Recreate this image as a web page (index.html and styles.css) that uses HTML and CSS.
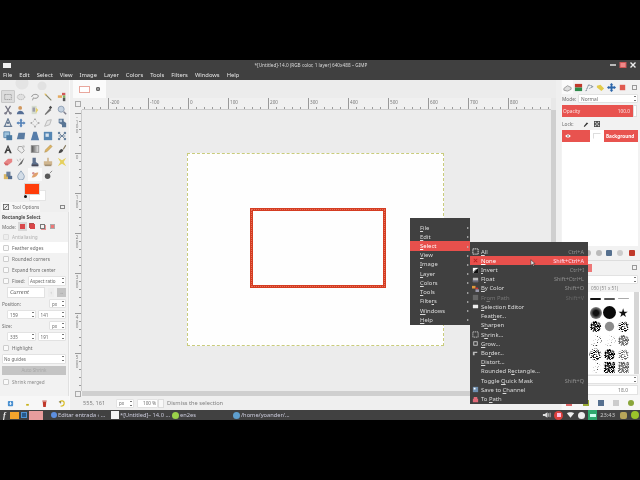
FILE: index.html
```html
<!DOCTYPE html>
<html lang="en">
<head>
<meta charset="utf-8">
<title>GIMP</title>
<link rel="stylesheet" href="styles.css">
</head>
<body>
<div class="bar-black"></div>
<div class="window">
  <header class="titlebar">
    <span class="win-icon"></span>
    <span class="win-title">*[Untitled]-14.0 (RGB color, 1 layer) 640x488 – GIMP</span>
    <span class="win-btns">
      <svg viewBox="0 0 8 8"><path d="M1 4h6" stroke="#eee" stroke-width="1.4"/></svg>
      <svg viewBox="0 0 8 8"><rect x="1" y="1.5" width="6" height="5" fill="#e88" stroke="#c55"/></svg>
      <svg viewBox="0 0 8 8"><path d="M1.5 1.5l5 5M6.5 1.5l-5 5" stroke="#eee" stroke-width="1.4"/></svg>
    </span>
  </header>
  <nav class="menubar">
    <span>File</span><span>Edit</span><span>Select</span><span>View</span><span>Image</span><span>Layer</span><span>Colors</span><span>Tools</span><span>Filters</span><span>Windows</span><span>Help</span>
  </nav>
  <div class="main">
    <aside class="left">
      <div class="wilber"></div>
      <div class="toolbox">
        <span class="tool active"><svg viewBox="0 0 12 12"><rect x="2" y="3" width="8" height="6" fill="#ddd" stroke="#888" stroke-dasharray="1.5 .7"/></svg></span>
        <span class="tool"><svg viewBox="0 0 12 12"><ellipse cx="6" cy="6" rx="4.5" ry="3.2" fill="#ddd" stroke="#999" stroke-dasharray="1.5 .7"/></svg></span>
        <span class="tool"><svg viewBox="0 0 12 12"><path d="M2 6c0-4 8-4 8-1s-5 3-6 2l-1 3" fill="none" stroke="#777" stroke-width="1.1"/></svg></span>
        <span class="tool"><svg viewBox="0 0 12 12"><path d="M3 3l7 7" stroke="#6c6c4c" stroke-width="1.3"/><path d="M2 2l2 2" stroke="#e2b33a" stroke-width="1.4"/></svg></span>
        <span class="tool"><svg viewBox="0 0 12 12"><path d="M1 4h5v3H1z" fill="#e2983a"/><path d="M6 1h4v3H6z" fill="#c33"/><path d="M7 4h3v3H7z" fill="#6a4"/><path d="M7 7h3v4H7z" fill="#333"/></svg></span>

        <span class="tool"><svg viewBox="0 0 12 12"><path d="M3 1l6 10M9 1L3 11" stroke="#556" stroke-width="1.4"/><circle cx="3" cy="10" r="1.5" fill="#667"/><circle cx="9" cy="10" r="1.5" fill="#667"/></svg></span>
        <span class="tool"><svg viewBox="0 0 12 12"><circle cx="5" cy="3.5" r="2.3" fill="#c9823a"/><path d="M1 11c0-5 7-6 9 0z" fill="#2f4f80"/></svg></span>
        <span class="tool"><svg viewBox="0 0 12 12"><path d="M2 1h6v10H2z" fill="#cfd8c8"/><path d="M7 3l3 3-3 4z" fill="#e4c648"/><path d="M3 3h3v5H3z" fill="#889"/></svg></span>
        <span class="tool"><svg viewBox="0 0 12 12"><path d="M2 11l6-7 2 2-7 6z" fill="#555"/><path d="M7 3l2-2 2 2-2 2z" fill="#222"/></svg></span>
        <span class="tool"><svg viewBox="0 0 12 12"><circle cx="5" cy="5" r="3.6" fill="#bcd" stroke="#7a8ea8" stroke-width="1.2"/><path d="M8 8l3 3" stroke="#667" stroke-width="1.8"/></svg></span>

        <span class="tool"><svg viewBox="0 0 12 12"><path d="M6 1L2 10h8z" fill="none" stroke="#47607f" stroke-width="1.5"/><circle cx="6" cy="6" r="1.4" fill="#47607f"/><path d="M1 10h3M8 10h3" stroke="#47607f" stroke-width="1.6"/></svg></span>
        <span class="tool"><svg viewBox="0 0 12 12"><path d="M6 .5L8 3H7v2h2V4l2.500 2L9 8V7H7v2h1l-2 2.500L4 9h1V7H3v1L.5 6 3 4v1h2V3H4z" fill="#2c66aa"/></svg></span>
        <span class="tool"><svg viewBox="0 0 12 12"><path d="M6 2l4 4-4 4-4-4z" fill="none" stroke="#888" stroke-dasharray="1 1"/><circle cx="6" cy="1.500" r="1" fill="#777"/><circle cx="6" cy="10.500" r="1" fill="#777"/><circle cx="1.500" cy="6" r="1" fill="#777"/><circle cx="10.500" cy="6" r="1" fill="#777"/></svg></span>
        <span class="tool"><svg viewBox="0 0 12 12"><path d="M2 10l3-7 5-1-2 6z" fill="#e4e4e4" stroke="#a5a5a5"/></svg></span>
        <span class="tool"><svg viewBox="0 0 12 12"><path d="M2 1h6v3l3 2v5H6V8L2 6z" fill="#36587f"/><path d="M3 2h3v3H3z" fill="#a9bdd2"/></svg></span>

        <span class="tool"><svg viewBox="0 0 12 12"><path d="M1 1h7v7H1z" fill="#8bb8d8" stroke="#245f91"/><path d="M4 5h7v6H4z" fill="#245f91"/></svg></span>
        <span class="tool"><svg viewBox="0 0 12 12"><path d="M3 2h8l-1 8H1z" fill="#36608f"/></svg></span>
        <span class="tool"><svg viewBox="0 0 12 12"><path d="M4 1h4l3 10H1z" fill="#31619a"/></svg></span>
        <span class="tool"><svg viewBox="0 0 12 12"><path d="M1 1h10v10H1z" fill="#2f6ca5"/><path d="M3 3h4v4H3z" fill="#cfe0ee"/></svg></span>
        <span class="tool"><svg viewBox="0 0 12 12"><path d="M2 2l8 8M10 2l-8 8M2 6h8" stroke="#3d5c7d" stroke-width="1"/><circle cx="2.500" cy="2.500" r="1.500" fill="#46688c"/><circle cx="9.500" cy="9.500" r="1.500" fill="#46688c"/><circle cx="9.500" cy="2.500" r="1.500" fill="#46688c"/><circle cx="2.500" cy="9.500" r="1.500" fill="#46688c"/></svg></span>

        <span class="tool"><svg viewBox="0 0 12 12"><path d="M6 1L1.500 11h2.300l1-2.600h2.400l1 2.600h2.300z" fill="#111"/><path d="M6 4L5.200 6.500h1.600z" fill="#f3f3f3"/></svg></span>
        <span class="tool"><svg viewBox="0 0 12 12"><path d="M3 3h4l3 5-3 3-5-4z" fill="#eee" stroke="#888"/><circle cx="9" cy="3" r="1.500" fill="#bbb"/></svg></span>
        <span class="tool"><svg viewBox="0 0 12 12"><rect x="1.500" y="2" width="9" height="8" fill="url(#g1)" stroke="#777"/><defs><linearGradient id="g1"><stop offset="0" stop-color="#222"/><stop offset="1" stop-color="#eee"/></linearGradient></defs></svg></span>
        <span class="tool"><svg viewBox="0 0 12 12"><path d="M2 10l1-3 6-6 2 2-6 6z" fill="#d9a53f" stroke="#8a6a2a" stroke-width=".5"/></svg></span>
        <span class="tool"><svg viewBox="0 0 12 12"><path d="M7 6l3-5 1 1-3 5z" fill="#6a5a3a"/><path d="M2 11c0-3 2-5 4-5l1.500 1.500C7 10 4 11 2 11z" fill="#222"/></svg></span>

        <span class="tool"><svg viewBox="0 0 12 12"><path d="M1 7l5-5h5v4l-5 4H3z" fill="#e66b6b"/><path d="M1 7l2 3h3V8z" fill="#c44"/></svg></span>
        <span class="tool"><svg viewBox="0 0 12 12"><path d="M2 11l3-4 5-6-3 7z" fill="#444"/><path d="M1 3l2 2M5 2v2" stroke="#888"/></svg></span>
        <span class="tool"><svg viewBox="0 0 12 12"><path d="M3 1h4v5l3 2v3H2V8l1-1z" fill="#3b5277"/><path d="M2 9h8v2H2z" fill="#223"/></svg></span>
        <span class="tool"><svg viewBox="0 0 12 12"><path d="M5 1h2v4h4v5H1V5h4z" fill="#c9a877"/><path d="M2 9h8v2H2z" fill="#8d7655"/></svg></span>
        <span class="tool"><svg viewBox="0 0 12 12"><path d="M1 1l5 3 5-3-3 5 3 5-5-3-5 3 3-5z" fill="#e3c93b"/></svg></span>

        <span class="tool"><svg viewBox="0 0 12 12"><path d="M1 5h5v6H1z" fill="#d6a93f"/><path d="M4 2h5v6H4z" fill="#4a6385"/><path d="M6 7h5v4H6z" fill="#2e4c75"/></svg></span>
        <span class="tool"><svg viewBox="0 0 12 12"><path d="M6 1C4 4 2 6 2 8a4 4 0 008 0c0-2-2-4-4-7z" fill="#cdd9e6" stroke="#6f89a6"/></svg></span>
        <span class="tool selected"><svg viewBox="0 0 12 12"><path d="M2 9c2-5 4-6 8-6-1 4-3 6-8 6z" fill="#d98c4a"/><circle cx="4" cy="4" r="1.500" fill="#c77"/></svg></span>
        <span class="tool"><svg viewBox="0 0 12 12"><circle cx="5.500" cy="7.500" r="3.300" fill="#333"/><path d="M8 4l3-3" stroke="#777" stroke-width="1.200"/></svg></span>
      </div>
      <div class="colors">
        <span class="fg-color"></span>
        <span class="bg-color"></span>
        <span class="def-color"></span>
      </div>
      <div class="tabrow">
        <span class="tab-opts"><svg viewBox="0 0 8 8"><rect x=".5" y=".5" width="7" height="7" fill="#eee" stroke="#555"/><path d="M2 6l4-4" stroke="#333"/></svg>Tool Options</span>
        <span class="tab-cfg"></span>
      </div>
      <form class="options">
        <div class="opt-row opt-title">Rectangle Select</div>
        <div class="opt-row opt-mode"><span class="mode-label">Mode:</span>
          <span class="modes">
            <span class="mode on"><i class="m-a"></i></span>
            <span class="mode"><i class="m-b"></i></span>
            <span class="mode"><i class="m-c"></i></span>
            <span class="mode"><i class="m-d"></i></span>
          </span>
        </div>
        <div class="opt-row dim"><i class="check faint"></i>Antialiasing</div>
        <div class="opt-row hot"><i class="check"></i>Feather edges</div>
        <div class="opt-row"><i class="check"></i>Rounded corners</div>
        <div class="opt-row"><i class="check"></i>Expand from center</div>
        <div class="opt-row"><i class="check"></i><span class="fixed-label">Fixed:</span><span class="combo fixed-combo">Aspect ratio<b></b></span></div>
        <div class="opt-row tall indent"><span class="entry current">Current</span><span class="mini">↕</span><span class="mini dark">↔</span></div>
        <div class="opt-row between">Position:<span class="combo unit">px<b></b></span></div>
        <div class="opt-row indent pair"><span class="combo num">159<b></b></span><span class="combo num">141<b></b></span></div>
        <div class="opt-row between">Size:<span class="combo unit">px<b></b></span></div>
        <div class="opt-row indent pair"><span class="combo num">335<b></b></span><span class="combo num">191<b></b></span></div>
        <div class="opt-row"><i class="check"></i>Highlight</div>
        <div class="opt-row"><span class="combo wide">No guides<b></b></span></div>
        <div class="opt-row tall"><span class="auto-shrink">Auto Shrink</span></div>
        <div class="opt-row soft-text"><i class="check"></i>Shrink merged</div>
      </form>
      <footer class="left-foot">
        <svg viewBox="0 0 8 8"><rect x="1" y="1" width="6" height="6" rx="1" fill="#4a90d0"/><path d="M4 2v3M2.800 4L4 5.400 5.200 4" stroke="#fff" fill="none"/></svg>
        <svg viewBox="0 0 8 8"><rect x="2.500" y="4.500" width="3" height="2" fill="#c8b21c"/></svg>
        <svg viewBox="0 0 8 8"><path d="M2 2h4l-.5 6h-3z" fill="#c0392b"/><path d="M1.500 1.200h5" stroke="#c0392b"/></svg>
        <svg viewBox="0 0 8 8"><path d="M2 3a2.500 2.500 0 115 1c0 2-2 3-4 3" fill="none" stroke="#d8bd20" stroke-width="1.300"/><path d="M1 2h2v2" fill="none" stroke="#333" stroke-width=".6"/></svg>
      </footer>
    </aside>

    <section class="center">
      <div class="img-tabs">
        <span class="img-tab"><i class="thumb"></i><i class="close-x"></i></span>
      </div>
      <div class="h-ruler-row">
        <span class="corner"></span>
        <div class="h-ruler">
          <span>-200</span><span>-100</span><span>0</span><span>100</span><span>200</span><span>300</span><span>400</span><span>500</span><span>600</span><span>700</span><span>800</span>
        </div>
        <span class="corner-r"></span>
      </div>
      <div class="work">
        <div class="v-ruler">
          <span>-100</span><span>0</span><span>100</span><span>200</span><span>300</span><span>400</span><span>500</span>
        </div>
        <div class="canvas">
          <div class="image">
            <div class="selection"></div>
          </div>
        </div>
        <div class="v-scroll"></div>
      </div>
      <div class="h-scroll-row"><span class="corner small"></span><div class="h-scroll"></div></div>
      <footer class="status">
        <span class="coords">555, 161</span>
        <span class="combo st-unit">px<b></b></span>
        <span class="combo st-zoom">100 %</span><span class="st-spin"></span>
        <span class="st-msg">Dismiss the selection</span>
      </footer>
    </section>

    <aside class="right">
      <div class="r-tabs">
        <span class="r-tab on"><svg viewBox="0 0 10 10"><path d="M1 6l4-3 4 2v2l-4 2-4-1z" fill="#ddd" stroke="#999"/></svg></span>
        <span class="r-tab"><svg viewBox="0 0 10 10"><path d="M1 1h8v4H1z" fill="#c0392b"/><path d="M1 5h8v4H1z" fill="#2c8a4a"/></svg></span>
        <span class="r-tab"><svg viewBox="0 0 10 10"><path d="M1 9l3-7 5 2-4 2" fill="none" stroke="#678" stroke-dasharray="1.500 .6" stroke-width="1.100"/></svg></span>
        <span class="r-tab"><svg viewBox="0 0 10 10"><path d="M1 3l4-1 4 4-3 3-5-4z" fill="#e3cb4a"/></svg></span>
        <span class="r-tab"><svg viewBox="0 0 10 10"><path d="M5 0l2 2H6v2h2V3l2 2-2 2V6H6v2h1l-2 2-2-2h1V6H2v1L0 5l2-2v1h2V2H3z" fill="#2c66aa"/></svg></span>
        <span class="r-tab"><svg viewBox="0 0 10 10"><rect x="2" y="2" width="6" height="6" fill="#e05a50"/></svg></span>
        <span class="r-cfg"></span>
      </div>
      <div class="r-row mode-row"><span class="r-mode-label">Mode:</span><span class="combo r-mode">Normal<b></b></span></div>
      <div class="opacity"><div class="op-bar"><span>Opacity</span><span>100.0</span></div><span class="op-spin"></span></div>
      <div class="r-row lock-row"><span class="lock-label">Lock:</span>
        <svg viewBox="0 0 8 8"><path d="M1 7l4-5 2 1-5 5z" fill="#333"/></svg>
        <svg viewBox="0 0 8 8"><path d="M0 0h8v8H0z" fill="#444"/><path d="M1 1h2v2H1zM5 1h2v2H5zM3 3h2v2H3zM1 5h2v2H1zM5 5h2v2H5z" fill="#ccc"/></svg>
      </div>
      <div class="layers">
        <div class="layer"><svg class="eye" viewBox="0 0 8 6"><path d="M0 3c2-3 6-3 8 0-2 3-6 3-8 0z" fill="#fff"/><circle cx="4" cy="3" r="1.200" fill="#555"/></svg><span class="layer-thumb"><i></i></span><b>Background</b></div>
      </div>
      <div class="layer-foot">
        <i class="lf l1"></i><i class="lf l2"></i><i class="lf l3"></i><i class="lf l4"></i><i class="lf l5"></i>
      </div>
      <div class="brush-tabs"><span class="brush-tab"></span><span class="r-cfg"></span></div>
      <div class="brush-filter"><span class="combo b-filter"><b></b></span></div>
      <div class="brush-label">050 (51 x 51)</div>
      <div class="brush-area">
        <svg class="defs" width="0" height="0">
          <defs>
            <filter id="n1" x="0" y="0" width="1" height="1"><feTurbulence type="fractalNoise" baseFrequency="1.100" seed="3" numOctaves="2"/><feColorMatrix values="0 0 0 0 0 0 0 0 0 0 0 0 0 0 0 0 0 0 -5 3.200"/><feComposite in2="SourceGraphic" operator="in"/></filter>
            <filter id="n2" x="0" y="0" width="1" height="1"><feTurbulence type="fractalNoise" baseFrequency=".7" seed="8" numOctaves="2"/><feColorMatrix values="0 0 0 0 0 0 0 0 0 0 0 0 0 0 0 0 0 0 -7 3.800"/><feComposite in2="SourceGraphic" operator="in"/></filter>
            <filter id="n3" x="0" y="0" width="1" height="1"><feTurbulence type="fractalNoise" baseFrequency=".9" seed="14" numOctaves="1"/><feColorMatrix values="0 0 0 0 0 0 0 0 0 0 0 0 0 0 0 0 0 0 -9 3.400"/><feComposite in2="SourceGraphic" operator="in"/></filter>
          </defs>
        </svg>
        <div class="brush-grid">
          <i></i><i></i><i class="bar"></i><i class="bar thin"></i><i class="bar hair"></i>
          <i></i><i></i><i class="soft"></i><i class="disc"></i><i class="star">★</i>
          <i></i><i></i><i><svg viewBox="0 0 14 14"><circle class="bn1" cx="7" cy="7" r="6"/></svg></i><i><svg viewBox="0 0 14 14"><circle class="blob-gray" cx="7" cy="7" r="5"/></svg></i><i><svg viewBox="0 0 14 14"><circle class="bn2" cx="7" cy="7" r="6"/></svg></i>
          <i></i><i></i><i><svg viewBox="0 0 14 14"><circle class="bn3" cx="7" cy="7" r="6.500"/></svg></i><i><svg viewBox="0 0 14 14"><circle class="bn3 light" cx="7" cy="7" r="6.500"/></svg></i><i><svg viewBox="0 0 14 14"><circle class="bn1 gray" cx="7" cy="7" r="6"/></svg></i>
          <i></i><i></i><i><svg viewBox="0 0 14 14"><circle class="bn2" cx="7" cy="7" r="6.500"/></svg></i><i><svg viewBox="0 0 14 14"><circle class="bn1 full" cx="7" cy="7" r="6"/></svg></i><i><svg viewBox="0 0 14 14"><circle class="bn2 gray" cx="7" cy="7" r="6"/></svg></i>
          <i></i><i></i><i><svg viewBox="0 0 14 14"><circle class="bn3" cx="7" cy="7" r="5.500"/></svg></i><i><svg viewBox="0 0 14 14"><rect class="bn1" x="1" y="1" width="12" height="12"/></svg></i><i><svg viewBox="0 0 14 14"><rect class="bn1 gray" x="1" y="1" width="12" height="12"/></svg></i>
        </div>
        <span class="brush-scroll"></span>
      </div>
      <div class="brush-combo"><span class="combo b-wide"><b></b></span></div>
      <div class="spacing"><span class="entry b-spacing">18.0</span></div>
      <footer class="brush-foot">
        <i class="bf b1"></i><i class="bf b2"></i><i class="bf b3"></i><i class="bf b4"></i><i class="bf b5"></i>
      </footer>
    </aside>
  </div>

  <div class="menu ctx-main">
    <div class="mi"><u>F</u>ile<em>▸</em></div>
    <div class="mi"><u>E</u>dit<em>▸</em></div>
    <div class="mi hl"><u>S</u>elect<em>▸</em></div>
    <div class="mi"><u>V</u>iew<em>▸</em></div>
    <div class="mi"><u>I</u>mage<em>▸</em></div>
    <div class="mi"><u>L</u>ayer<em>▸</em></div>
    <div class="mi"><u>C</u>olors<em>▸</em></div>
    <div class="mi"><u>T</u>ools<em>▸</em></div>
    <div class="mi">Filte<u>r</u>s<em>▸</em></div>
    <div class="mi"><u>W</u>indows<em>▸</em></div>
    <div class="mi"><u>H</u>elp<em>▸</em></div>
  </div>
  <div class="menu ctx-sub">
    <div class="si"><svg viewBox="0 0 8 8"><rect x="1" y="1" width="6" height="6" fill="none" stroke="#eee" stroke-dasharray="1.500 .6"/></svg><span><u>A</u>ll</span><kbd>Ctrl+A</kbd></div>
    <div class="si hl"><svg viewBox="0 0 8 8"><path d="M2 2l4 4M6 2L2 6" stroke="#b22" stroke-width="1.200"/></svg><span><u>N</u>one</span><kbd>Shift+Ctrl+A</kbd></div>
    <div class="si"><svg viewBox="0 0 8 8"><rect x="1" y="1" width="6" height="6" fill="#fff"/><path d="M1 7L7 1v6z" fill="#111"/><path d="M2 5.500l3-3" stroke="#111"/></svg><span><u>I</u>nvert</span><kbd>Ctrl+I</kbd></div>
    <div class="si"><svg viewBox="0 0 8 8"><path d="M1 2h6v5H1z" fill="#bbb"/><path d="M1 5h6v2H1z" fill="#667"/></svg><span>F<u>l</u>oat</span><kbd>Shift+Ctrl+L</kbd></div>
    <div class="si"><svg viewBox="0 0 8 8"><path d="M0 1h4v3H0z" fill="#e2983a"/><path d="M4 3h3v2H4z" fill="#c33"/><path d="M4 5h4v3H4z" fill="#99a"/></svg><span><u>B</u>y Color</span><kbd>Shift+O</kbd></div>
    <div class="si off"><svg viewBox="0 0 8 8"><rect x="1" y="1" width="6" height="6" fill="#666"/></svg><span>Fr<u>o</u>m Path</span><kbd>Shift+V</kbd></div>
    <div class="si"><svg viewBox="0 0 8 8"><path d="M1 2h6v4H1z" fill="#eee"/></svg><span><u>S</u>election Editor</span></div>
    <div class="si"><span>Feat<u>h</u>er...</span></div>
    <div class="si"><span>S<u>h</u>arpen</span></div>
    <div class="si"><svg viewBox="0 0 8 8"><rect x="1" y="1" width="6" height="6" fill="none" stroke="#ccc" stroke-dasharray="1.500 .7"/></svg><span>S<u>h</u>rink...</span></div>
    <div class="si"><svg viewBox="0 0 8 8"><rect x="2" y="2" width="4" height="4" fill="none" stroke="#ccc"/></svg><span><u>G</u>row...</span></div>
    <div class="si"><svg viewBox="0 0 8 8"><path d="M1 2h5v1.500H3V6H1z" fill="#bbb"/></svg><span>Bo<u>r</u>der...</span></div>
    <div class="si"><span><u>D</u>istort...</span></div>
    <div class="si"><span>Rounded R<u>e</u>ctangle...</span></div>
    <div class="si"><span>Toggle <u>Q</u>uick Mask</span><kbd>Shift+Q</kbd></div>
    <div class="si"><svg viewBox="0 0 8 8"><rect x="1" y="1" width="6" height="6" fill="#6f8fb0"/><path d="M2 2h2v2H2z" fill="#fff"/></svg><span>Save to <u>C</u>hannel</span></div>
    <div class="si"><svg viewBox="0 0 8 8"><path d="M2 1h4v2H2zM1 3h6v4H1z" fill="#e06a78"/></svg><span>To <u>P</u>ath</span></div>
  </div>
  <svg class="cursor" viewBox="0 0 8 11"><path d="M1 1v8l2-2 1.500 3 1.200-.6L4.400 6.500H7z" fill="#ddd" stroke="#222" stroke-width=".7"/></svg>
</div>

<div class="taskbar">
  <div class="launchers">
    <span class="lf-f">f</span>
    <span class="l-folder"></span>
    <span class="l-win"></span>
    <span class="l-mail"></span>
  </div>
  <div class="tasks">
    <span class="task t-w1"><i class="t-chrome"></i>Editar entrada ‹ ...</span>
    <span class="task t-w2"><i class="t-gimp"></i>*[Untitled]– 14.0 ...</span>
    <span class="task t-w3"><i class="t-green"></i>en2es</span>
    <span class="task t-w4"><i class="t-files"></i>/home/yoander/...</span>
  </div>
  <div class="tray">
    <svg viewBox="0 0 10 8"><path d="M1 3h2l3-2v6L3 5H1z" fill="#ddd"/><path d="M7 2v4M9 1.500v5" stroke="#ccc"/></svg>
    <span class="t-rec"><i></i></span>
    <svg viewBox="0 0 10 8"><path d="M1 2c2-1.500 6-1.500 8 0L5 7z" fill="#eee"/></svg>
    <span class="t-white"></span>
    <span class="t-batt"><i></i></span>
    <span class="clock">23:43</span>
    <span class="t-badge"></span>
    <span class="t-power"></span>
  </div>
</div>
<div class="bar-black"></div>
</body>
</html>
```
FILE: styles.css
```css
* { box-sizing: border-box; }
html, body { margin: 0; padding: 0; }
body {
  width: 640px; height: 480px; overflow: hidden; background: #000;
  font-family: "Noto Sans", "Open Sans", sans-serif; font-size: 6.2px; color: #555;
  display: flex; flex-direction: column;
}
.bar-black { height: 60px; background: #000; flex: none; }
i, em, kbd { font-style: normal; font-family: inherit; }

.window { position: relative; height: 350px; flex: none; display: flex; flex-direction: column; background: #efefef; filter: blur(.3px); }

.titlebar { height: 10px; flex: none; background: #404040; display: flex; align-items: center; position: relative; color: #ddd; }
.win-icon { width: 8px; height: 5px; margin-left: 3px; background: #f2f2f2; }
.win-title { position: absolute; left: 254px; width: 114px; white-space: nowrap; font-size: 4.7px; text-align: center; color: #d8d8d8; }
.win-btns { margin-left: auto; display: flex; gap: 2px; padding-right: 3px; }
.win-btns svg { width: 8px; height: 8px; }

.menubar { height: 10px; flex: none; background: #404040; color: #e6e6e6; display: flex; align-items: center; gap: 7px; padding-left: 3px; font-size: 5.8px; }

.main { flex: 1; min-height: 0; display: flex; }

/* Left dock */
.left { width: 70px; flex: none; display: flex; flex-direction: column; background: #efefef; border-right: 1px solid #f9f9f9; }
.wilber { height: 10px; flex: none; background: radial-gradient(circle at 42px 6px, #e2e2e2 4px, transparent 5px), radial-gradient(circle at 22px 3px, #e4e4e4 6px, transparent 7px); }
.toolbox { display: grid; grid-template-columns: repeat(5, 13.5px); grid-auto-rows: 13px; padding-left: 1px; flex: none; height: 91px; }
.tool { display: flex; align-items: center; justify-content: center; }
.tool svg { width: 10px; height: 10px; opacity: .8; }
.tool.active { background: #dcdcdc; border: 1px solid #c8c8c8; border-radius: 1px; }
.tool.selected { background: #fafafa; }

.colors { height: 21px; flex: none; position: relative; }
.fg-color { position: absolute; left: 24px; top: 2px; width: 16px; height: 12px; background: #ff3d0a; border: 1px solid #d8d8d8; z-index: 1; }
.bg-color { position: absolute; left: 29px; top: 9px; width: 17px; height: 11px; background: #fff; border: 1px solid #e4e4e4; }
.def-color { position: absolute; left: 24px; top: 14px; width: 3px; height: 3px; background: #111; border-radius: 50%; }

.tabrow { height: 10px; flex: none; display: flex; justify-content: space-between; align-items: center; }
.tab-opts { margin-left: 1px; width: 39px; height: 10px; display: flex; gap: 3px; align-items: center; background: #f7f7f7; padding-left: 2px; font-size: 4.6px; color: #6a6a6a; white-space: nowrap; }
.tab-opts svg { width: 6px; height: 6px; flex: none; }
.tab-cfg { width: 5px; height: 4px; margin-right: 4px; border: 1px solid #888; }

.options { flex: 1; min-height: 0; margin: 0; padding: 0; display: flex; flex-direction: column; background: #f2f2f2; border-right: 1px solid #e0e0e0; }
.opt-row { height: 11px; flex: none; display: flex; align-items: center; padding-left: 2px; padding-right: 2px; color: #6b6b6b; white-space: nowrap; font-size: 4.7px; }
.opt-row.tall { height: 12px; }
.opt-title { height: 10px; font-weight: 700; color: #4a4a4a; }
.opt-mode { height: 9px; }
.mode-label { width: 16px; flex: none; }
.fixed-label { width: 13px; flex: none; }
.dim { color: #b0b0b0; }
.soft-text { color: #8a8a8a; }
.hot { background: #fff; }
.indent { padding-left: 7px; }
.between { justify-content: space-between; }
.pair { gap: 2px; padding-left: 7px; }
.check { width: 6px; height: 6px; margin-right: 3px; margin-left: 1px; border: 1px solid #cdcdcd; background: #fafafa; border-radius: 1px; flex: none; }
.check.faint { background: #eee; border-color: #ddd; }
.modes { display: flex; gap: 1px; }
.mode { width: 9px; height: 9px; display: flex; align-items: center; justify-content: center; }
.mode.on { background: #d8d8d8; }
.mode i { width: 5px; height: 5px; display: block; }
.m-a { background: #d9484a; }
.m-b { background: #d9484a; box-shadow: -1px -1px 0 #b05050; }
.m-c { border: 1px solid #777; box-shadow: 1px 1px 0 #e79090; }
.m-d { border: 1px solid #aaa; background: #e77; background-clip: content-box; }

.combo { position: relative; display: inline-flex; align-items: center; height: 9px; background: #fff; border: 1px solid #e2e2e2; border-radius: 1px; padding-left: 1px; color: #6b6b6b; font-size: 4.6px; white-space: nowrap; }
.combo b { position: absolute; right: 1px; top: 1px; width: 2px; height: 5px; border-top: 1px solid #777; border-bottom: 1px solid #777; }
.fixed-combo { margin-left: 3px; width: 41px; height: 10px; }
.entry { background: #fff; border: 1px solid #e2e2e2; display: inline-flex; align-items: center; }
.current { width: 39px; height: 11px; font-style: italic; font-size: 5.6px; padding-left: 2px; color: #666; }
.mini { width: 7px; height: 9px; margin-left: 3px; text-align: center; line-height: 9px; font-size: 4px; background: #eee; color: #aaa; }
.mini.dark { width: 9px; background: #c4c4c4; color: #999; }
.unit { width: 17px; padding-left: 2px; }
.num { width: 29px; padding-left: 2px; }
.wide { width: 66px; height: 10px; }
.auto-shrink { width: 66px; height: 9px; background: #c4c4c4; color: #a8a8a8; text-align: center; line-height: 9px; font-size: 4.6px; }
.left-foot { height: 14px; flex: none; display: flex; align-items: center; background: #f7f7f7; padding-left: 7px; gap: 10px; }
.left-foot svg { width: 7px; height: 7px; }

/* Center */
.center { width: 486px; flex: none; padding-left: 3px; display: flex; flex-direction: column; background: #efefef; margin-right: 5px; }
.img-tabs { height: 18px; flex: none; display: flex; background: #ececec; }
.img-tab { width: 33px; height: 18px; display: flex; align-items: center; gap: 6px; padding-left: 6px; background: #fbfbfb; }
.thumb { width: 11px; height: 7px; border: 1px solid #e9a79d; background: #fff; }
.close-x { width: 4px; height: 4px; background: #999; border: 1px solid #666; border-radius: 1px; }
.h-ruler-row { height: 12px; flex: none; display: flex; background: #f0f0f0; }
.corner { width: 9px; flex: none; position: relative; }
.corner::after { content: ""; position: absolute; left: 2px; top: 3px; width: 4px; height: 4px; border: 1px solid #aaa; background: #eee; }
.corner.small { height: 5px; }
.corner.small::after { top: 0; }
.corner-r { width: 5px; flex: none; background: #e8e8e8; }
.h-ruler { flex: 1; min-width: 0; overflow: hidden; display: flex; padding-left: 26px; font-size: 4.6px; color: #777; line-height: 5px;
  background: repeating-linear-gradient(90deg, #999 0 1px, transparent 1px 8px) 2px 9px / 100% 3px no-repeat; border-bottom: 1px solid #ccc; }
.h-ruler span { flex: none; width: 40px; height: 11px; border-left: 1px solid #999; padding-left: 1px; padding-top: 2px; }

.work { height: 281px; flex: none; display: flex; }
.v-ruler { width: 9px; flex: none; overflow: hidden; display: flex; flex-direction: column; padding-top: 3px; padding-left: 2px; font-size: 4.5px; line-height: 4.6px; color: #808080;
  background: repeating-linear-gradient(180deg, #999 0 1px, transparent 1px 8px) 6px 3px / 3px 100% no-repeat; border-right: 1px solid #ccc; }
.v-ruler span { flex: none; height: 40px; width: 7px; padding-right: 3px; word-break: break-all; border-top: 1px solid #999; padding-top: 1px; text-align: center; }
.canvas { flex: 1; min-width: 0; background: #ececec; display: flex; align-items: center; justify-content: center; padding-right: 3px; padding-bottom: 2px; }
.image { position: relative; width: 257px; height: 193px; background: #fefefe; border: 1px dashed #c9cc7c; }
.selection { position: absolute; left: 62px; top: 54px; width: 136px; height: 80px; border: 3px solid #d43d22; outline: 1px dotted #e8705a; outline-offset: -2px; }
.v-scroll { width: 5px; flex: none; background: #cfcfcf; }
.h-scroll-row { height: 5px; flex: none; display: flex; }
.h-scroll { flex: 1; background: #cfcfcf; }
.status { flex: 1; min-height: 0; display: flex; align-items: center; background: #efefef; font-size: 6px; color: #808080; }
.coords { width: 43px; padding-left: 10px; flex: none; white-space: nowrap; font-size: 5.600px; }
.st-unit { width: 18px; height: 9px; padding-left: 2px; }
.st-zoom { width: 21px; height: 9px; margin-left: 3px; justify-content: flex-end; padding-right: 1px; }
.st-spin { width: 6px; height: 9px; flex: none; background: #f8f8f8; border: 1px solid #ddd; }
.st-msg { margin-left: 3px; white-space: nowrap; font-size: 5.7px; }

/* Right dock */
.right { width: 79px; flex: none; display: flex; flex-direction: column; background: #f2f2f2; padding-left: 1px; overflow: hidden; }
.r-tabs { height: 14px; flex: none; display: flex; align-items: center; position: relative; }
.r-tab { width: 11px; height: 14px; display: flex; align-items: center; justify-content: center; flex: none; }
.r-tab.on { background: #fafafa; }
.r-tab svg { width: 9px; height: 9px; }
.r-cfg { width: 5px; height: 5px; margin-left: auto; margin-right: 3px; border: 1px solid #999; }
.r-row { display: flex; align-items: center; flex: none; font-size: 4.8px; color: #6b6b6b; }
.mode-row { height: 9px; }
.r-mode-label { width: 16px; flex: none; }
.r-mode { width: 60px; height: 9px; padding-left: 2px; font-size: 4.8px; }
.opacity { height: 12px; margin-top: 2px; flex: none; display: flex; padding-right: 3px; }
.op-bar { flex: 1; display: flex; justify-content: space-between; align-items: center; background: #e8534f; color: #fbe4e4; padding: 0 3px 0 1px; font-size: 4.8px; }
.op-spin { width: 4px; background: #fff; border: 1px solid #ddd; }
.lock-row { height: 11px; margin-top: 1px; gap: 5px; }
.lock-label { width: 16px; flex: none; }
.lock-row svg { width: 6px; height: 6px; }
.layers { height: 116px; flex: none; margin-top: 1px; margin-right: 2px; background: #fff; }
.layer { height: 12px; display: flex; align-items: center; background: #e8534f; color: #fff; font-size: 4.7px; }
.layer .eye { width: 6px; height: 4px; margin-left: 3px; flex: none; }
.layer-thumb { width: 14px; height: 12px; margin-left: 19px; background: #fff; display: flex; align-items: center; justify-content: center; flex: none; }
.layer-thumb i { width: 8px; height: 6px; border: 1px solid #ddd; border-right-color: #fff; border-bottom-color: #fff; }
.layer b { margin-left: 2px; white-space: nowrap; }
.layer-foot { height: 12px; flex: none; display: flex; align-items: center; padding-left: 23px; gap: 4.500px; margin-top: 1px; }
.lf { width: 6px; height: 6px; flex: none; background: #bbb; border-radius: 50%; }
.l3 { background: #56708f; border-radius: 1px; }
.l4 { background: #ccc; }
.l5 { margin-left: 2px; background: #c0392b; border-radius: 1px; }
.brush-tabs { height: 14px; flex: none; margin-top: 1px; display: flex; align-items: center; border-top: 1px solid #ddd; }
.brush-tab { width: 4px; height: 8px; margin-left: 26px; background: #e77; }
.brush-filter { height: 11px; flex: none; display: flex; align-items: center; }
.b-filter { width: 76px; height: 9px; }
.brush-label { height: 7px; flex: none; font-size: 4.6px; color: #888; padding-left: 29px; white-space: nowrap; line-height: 7px; }
.brush-area { height: 82px; flex: none; display: flex; background: #fff; overflow: hidden; }
.defs { position: absolute; }
.brush-grid { width: 72px; display: grid; grid-template-columns: repeat(5, 13.6px); grid-auto-rows: 13.8px; }
.brush-grid i { display: flex; align-items: center; justify-content: center; }
.brush-grid svg { width: 13px; height: 13px; }
.bar::after { content: ""; width: 11px; height: 2px; background: #111; border-radius: 1px; }
.bar.thin::after { height: 2px; background: #555; }
.bar.hair::after { height: 1px; background: #aaa; }
.soft::after { content: ""; width: 12px; height: 12px; border-radius: 50%; background: radial-gradient(circle, #111 30%, #888 70%, transparent 100%); }
.disc::after { content: ""; width: 13px; height: 13px; border-radius: 50%; background: #0a0a0a; }
.brush-grid .star { font-size: 12px; color: #111; line-height: 1; font-family: "DejaVu Sans", sans-serif; }
.bn1 { filter: url(#n1); fill: #222; }
.bn2 { filter: url(#n2); fill: #111; }
.bn3 { filter: url(#n3); fill: #222; }
.bn1.gray, .bn2.gray { opacity: .6; }
.bn3.light { opacity: .5; }
.bn1.full { opacity: 1; }
.blob-gray { fill: #666; opacity: .75; }
.brush-scroll { width: 5px; background: #d6d6d6; }
.brush-combo { height: 10px; flex: none; display: flex; align-items: center; }
.b-wide { width: 76px; height: 9px; }
.spacing { height: 10px; flex: none; display: flex; align-items: center; margin-top: 1px; }
.b-spacing { width: 76px; height: 10px; justify-content: flex-end; padding-right: 9px; font-size: 5px; color: #777; }
.brush-foot { flex: 1; min-height: 0; display: flex; align-items: center; padding-left: 26px; gap: 9px; background: #f7f7f7; }
.bf { width: 6px; height: 6px; flex: none; }
.b1 { margin-left: -22px; background: #d66; }
.b2 { margin-left: 2px; background: #9a3; }
.b3 { background: #56708f; }
.b4 { background: #ccc; }
.b5 { background: #8aa63a; border-radius: 50%; }

/* Menus over content */
.menu { position: absolute; background: #404040; color: #dcdcdc; padding-top: 5px; z-index: 5; font-size: 5.900px; }
.ctx-main { left: 410px; top: 158px; width: 60px; height: 107px; }
.ctx-sub { left: 470px; top: 182px; width: 118px; height: 162px; z-index: 6; }
.mi, .si { height: 9.23px; display: flex; align-items: center; white-space: nowrap; }
.mi { padding-left: 10px; position: relative; }
.mi em { position: absolute; right: 1px; font-size: 4px; color: #bbb; }
.si { position: relative; padding-left: 11px; }
.si svg { position: absolute; left: 2px; width: 7px; height: 7px; }
.si kbd { margin-left: auto; padding-right: 4px; color: #8f8f8f; font-size: 5.500px; }
.hl { background: #e8504c; color: #fff; }
.hl kbd { color: #fde; }
.off { color: #777; }
.off kbd { color: #666; }
.cursor { position: absolute; left: 530px; top: 199px; width: 6px; height: 8px; z-index: 7; }

/* Taskbar */
.taskbar { height: 10px; flex: none; background: #414141; display: flex; align-items: center; color: #ddd; font-size: 5.7px; filter: blur(.3px); }
.launchers { width: 48px; flex: none; display: flex; align-items: center; padding-left: 3px; height: 10px; }
.lf-f { width: 5px; font: italic 700 8px "Liberation Serif", serif; color: #eee; margin-right: 2px; }
.l-folder { width: 9px; height: 7px; background: #f2a42c; margin-right: 2px; }
.l-win { width: 6px; height: 6px; border: 1px solid #4f93d2; background: #27598a; margin-right: 2px; }
.l-mail { width: 14px; height: 9px; background: #e89d9d; position: relative; }
.tasks { display: flex; flex: none; width: 245px; margin-left: 3px; }
.task { display: flex; align-items: center; gap: 1px; white-space: nowrap; flex: none; overflow: hidden; height: 10px; color: #ccd; }
.t-w1 { width: 60px; }
.t-w2 { width: 61px; }
.t-w3 { width: 61px; }
.t-w4 { width: 60px; }
.t-chrome { width: 6px; height: 6px; border-radius: 50%; background: #5d8fe0; flex: none; }
.t-gimp { width: 8px; height: 8px; background: #f4f4f4; flex: none; }
.t-green { width: 7px; height: 7px; border-radius: 50%; background: #9bd24a; flex: none; }
.t-files { width: 7px; height: 7px; border-radius: 50%; background: #5f9fcf; flex: none; }
.tray { margin-left: auto; display: flex; align-items: center; gap: 2px; padding-right: 1px; height: 10px; }
.tray svg { width: 9px; height: 8px; }
.t-rec { width: 9px; height: 9px; background: #d9403b; border-radius: 50%; display: flex; align-items: center; justify-content: center; margin: 0 1px; }
.t-rec i { width: 4px; height: 4px; background: #fbd; }
.t-white { width: 7px; height: 7px; background: #eee; border-radius: 50%; margin-left: 1px; }
.t-batt { width: 9px; height: 10px; background: #2faa6e; display: flex; align-items: center; justify-content: center; margin-left: 1px; }
.t-batt i { width: 6px; height: 3px; background: #cfe; }
.clock { font-size: 5.8px; color: #ccc; margin: 0 1px; }
.t-badge { width: 7px; height: 7px; background: #b7a55a; border-radius: 2px; margin-left: 2px; }
.t-power { width: 8px; height: 8px; background: #9bc32a; border-radius: 50%; margin-left: 2px; }
```
